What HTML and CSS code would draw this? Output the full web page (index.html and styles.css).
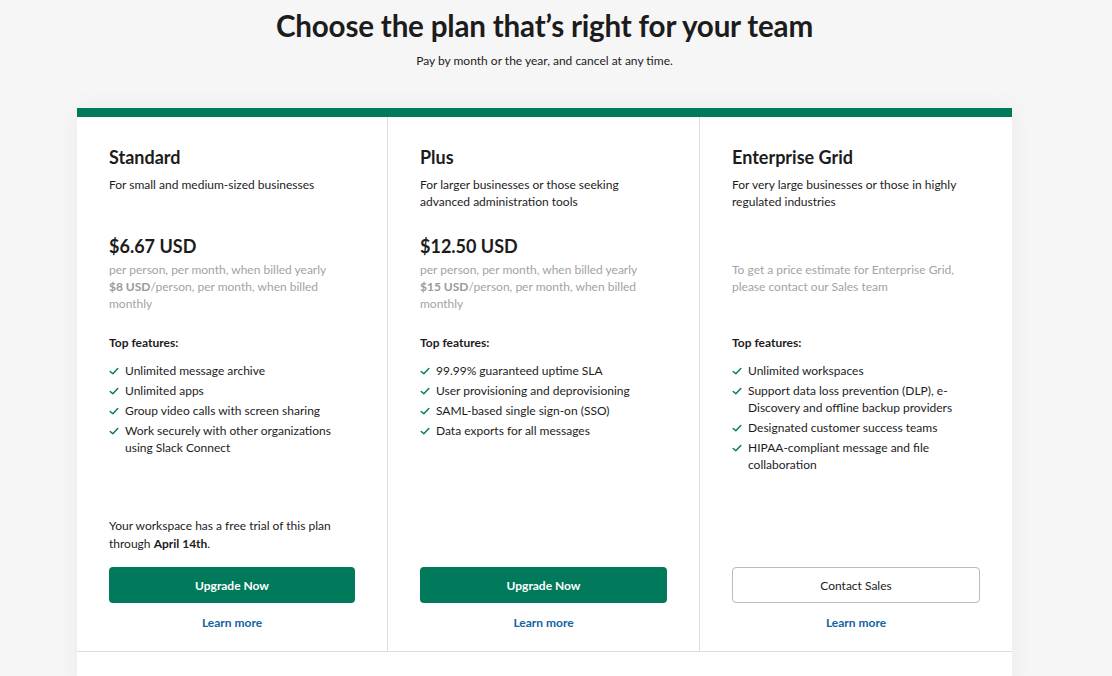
FILE: index.html
```html
<!DOCTYPE html>
<html lang="en">
<head>
<meta charset="utf-8">
<title>Choose the plan</title>
<link rel="stylesheet" href="styles.css">
</head>
<body>
<main class="page">
  <header class="intro">
    <h1 class="title">Choose the plan that’s right for your team</h1>
    <p class="subtitle">Pay by month or the year, and cancel at any time.</p>
  </header>
  <section class="card">
    <div class="plans">
      <div class="plan">
        <h2 class="plan-name">Standard</h2>
        <p class="plan-desc">For small and medium-sized businesses</p>
        <div class="price">
          <div class="price-amount">$6.67 USD</div>
          <p class="price-note">per person, per month, when billed yearly<br><span class="strong-gray">$8 USD</span>/person, per month, when billed monthly</p>
        </div>
        <h3 class="feat-title">Top features:</h3>
        <ul class="features">
          <li><svg class="check" viewBox="0 0 10 10"><path d="M1.2 5.4 L3.8 7.8 L8.8 2.4"/></svg><span>Unlimited message archive</span></li>
          <li><svg class="check" viewBox="0 0 10 10"><path d="M1.2 5.4 L3.8 7.8 L8.8 2.4"/></svg><span>Unlimited apps</span></li>
          <li><svg class="check" viewBox="0 0 10 10"><path d="M1.2 5.4 L3.8 7.8 L8.8 2.4"/></svg><span>Group video calls with screen sharing</span></li>
          <li><svg class="check" viewBox="0 0 10 10"><path d="M1.2 5.4 L3.8 7.8 L8.8 2.4"/></svg><span>Work securely with other organizations using Slack Connect</span></li>
        </ul>
        <div class="plan-foot">
          <p class="trial">Your workspace has a free trial of this plan through <strong>April 14th</strong>.</p>
          <a class="btn btn-primary" href="#">Upgrade Now</a>
          <a class="learn" href="#">Learn more</a>
        </div>
      </div>
      <div class="plan">
        <h2 class="plan-name">Plus</h2>
        <p class="plan-desc">For larger businesses or those seeking advanced administration tools</p>
        <div class="price">
          <div class="price-amount">$12.50 USD</div>
          <p class="price-note">per person, per month, when billed yearly<br><span class="strong-gray">$15 USD</span>/person, per month, when billed monthly</p>
        </div>
        <h3 class="feat-title">Top features:</h3>
        <ul class="features">
          <li><svg class="check" viewBox="0 0 10 10"><path d="M1.2 5.4 L3.8 7.8 L8.8 2.4"/></svg><span>99.99% guaranteed uptime SLA</span></li>
          <li><svg class="check" viewBox="0 0 10 10"><path d="M1.2 5.4 L3.8 7.8 L8.8 2.4"/></svg><span>User provisioning and deprovisioning</span></li>
          <li><svg class="check" viewBox="0 0 10 10"><path d="M1.2 5.4 L3.8 7.8 L8.8 2.4"/></svg><span>SAML-based single sign-on (SSO)</span></li>
          <li><svg class="check" viewBox="0 0 10 10"><path d="M1.2 5.4 L3.8 7.8 L8.8 2.4"/></svg><span>Data exports for all messages</span></li>
        </ul>
        <div class="plan-foot">
          <a class="btn btn-primary" href="#">Upgrade Now</a>
          <a class="learn" href="#">Learn more</a>
        </div>
      </div>
      <div class="plan">
        <h2 class="plan-name">Enterprise Grid</h2>
        <p class="plan-desc">For very large businesses or those in highly regulated industries</p>
        <div class="price">
          <div class="price-amount price-empty"></div>
          <p class="price-note">To get a price estimate for Enterprise Grid, please contact our Sales team</p>
        </div>
        <h3 class="feat-title">Top features:</h3>
        <ul class="features">
          <li><svg class="check" viewBox="0 0 10 10"><path d="M1.2 5.4 L3.8 7.8 L8.8 2.4"/></svg><span>Unlimited workspaces</span></li>
          <li><svg class="check" viewBox="0 0 10 10"><path d="M1.2 5.4 L3.8 7.8 L8.8 2.4"/></svg><span>Support data loss prevention (DLP), e-Discovery and offline backup providers</span></li>
          <li><svg class="check" viewBox="0 0 10 10"><path d="M1.2 5.4 L3.8 7.8 L8.8 2.4"/></svg><span>Designated customer success teams</span></li>
          <li><svg class="check" viewBox="0 0 10 10"><path d="M1.2 5.4 L3.8 7.8 L8.8 2.4"/></svg><span>HIPAA-compliant message and file collaboration</span></li>
        </ul>
        <div class="plan-foot">
          <a class="btn btn-outline" href="#">Contact Sales</a>
          <a class="learn" href="#">Learn more</a>
        </div>
      </div>
    </div>
    <div class="card-below"></div>
  </section>
</main>
</body>
</html>
```

FILE: styles.css
```css
* { box-sizing: border-box; }
html, body { margin: 0; padding: 0; }
body {
  background: #f6f6f6;
  font-family: Lato, "Open Sans", sans-serif;
  color: #1d1c1d;
  height: 676px;
  overflow: hidden;
}
.page {
  width: 1089px;
  display: flex;
  flex-direction: column;
  align-items: center;
}
.intro {
  text-align: center;
  padding-top: 7px;
}
.title {
  margin: 0;
  font-size: 29.6px;
  font-weight: 700;
  line-height: 38px;
  letter-spacing: -0.2px;
}
.subtitle {
  margin: 8px 0 0;
  font-size: 12px;
  line-height: 16px;
  color: #1d1c1d;
}
.card {
  margin-top: 39px;
  width: 935px;
  background: #fff;
  border-top: 9px solid #007a5a;
  box-shadow: 0 0 24px rgba(0,0,0,0.05);
}
.plans {
  display: grid;
  grid-template-columns: 310px 312px 313px;
  border-bottom: 1px solid #dddddd;
  height: 535px;
}
.plan {
  display: flex;
  flex-direction: column;
  padding: 29px 32px 20px;
  border-left: 1px solid #dddddd;
}
.plan:first-child { border-left: none; }
.plan-name {
  margin: 0;
  font-size: 18px;
  font-weight: 700;
  line-height: 22px;
}
.plan-desc {
  margin: 8px 0 0;
  font-size: 12px;
  line-height: 17px;
  height: 34px;
}
.price { margin-top: 25px; height: 82px; }
.price-amount {
  font-size: 18px;
  font-weight: 700;
  line-height: 22px;
  height: 22px;
}
.price-note {
  margin: 4px 0 0;
  font-size: 12px;
  line-height: 17px;
  color: #a3a3a3;
}
.strong-gray { font-weight: 700; color: #9a9a9a; }
.feat-title {
  margin: 17px 0 0;
  font-size: 12px;
  font-weight: 700;
  line-height: 17px;
}
.features {
  list-style: none;
  margin: 11px 0 0;
  padding: 0;
  display: flex;
  flex-direction: column;
  gap: 3px;
}
.features li {
  display: flex;
  gap: 6px;
  font-size: 12px;
  line-height: 17px;
}
.check {
  flex: none;
  width: 10px;
  height: 10px;
  margin-top: 4px;
  fill: none;
  stroke: #007a5a;
  stroke-width: 1.4;
  stroke-linecap: round;
  stroke-linejoin: round;
}
.plan-foot {
  margin-top: auto;
  display: flex;
  flex-direction: column;
}
.trial {
  margin: 0 0 14px;
  font-size: 12px;
  line-height: 18px;
}
.trial strong { font-weight: 700; }
.btn {
  display: flex;
  align-items: center;
  justify-content: center;
  height: 36px;
  border-radius: 4px;
  font-size: 12px;
  font-weight: 700;
  text-decoration: none;
}
.btn-primary { background: #007a5a; color: #fff; }
.btn-outline {
  background: #fff;
  color: #1d1c1d;
  border: 1px solid #bbbbbb;
  font-weight: 400;
}
.learn {
  margin-top: 12px;
  text-align: center;
  font-size: 12px;
  font-weight: 700;
  line-height: 16px;
  color: #1264a3;
  text-decoration: none;
}
.card-below { height: 40px; background: #fff; }
```
